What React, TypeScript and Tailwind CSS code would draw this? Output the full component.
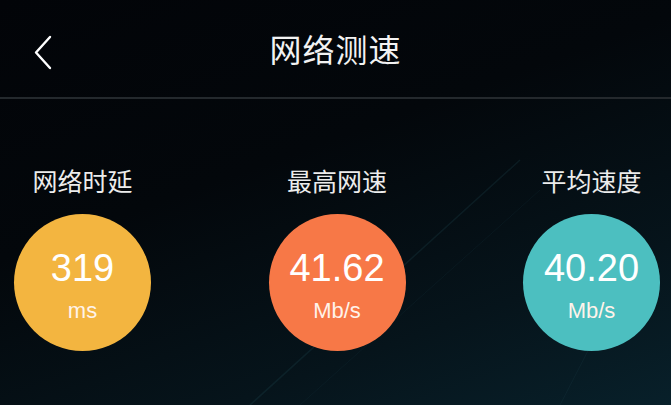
interface Stat {
  label: string;
  value: string;
  unit: string;
  color: string;
}

const stats: Stat[] = [
  { label: '网络时延', value: '319', unit: 'ms', color: 'bg-[#f3b540]' },
  { label: '最高网速', value: '41.62', unit: 'Mb/s', color: 'bg-[#f77847]' },
  { label: '平均速度', value: '40.20', unit: 'Mb/s', color: 'bg-[#4cbfc0]' },
];

const cjk = 'font-["Noto_Sans_CJK_SC","Noto_Sans",sans-serif]';
const latin = 'font-["Liberation_Sans",Arial,sans-serif]';

export default function App() {
  return (
    <div className="relative h-[405px] w-[671px] overflow-hidden bg-[linear-gradient(160deg,#020408_0%,#03070b_40%,#06141b_75%,#08202a_100%)] text-white">
      {/* faint light streaks in the backdrop */}
      <svg className="pointer-events-none absolute inset-0" width="671" height="405" viewBox="0 0 671 405">
        <line x1="250" y1="405" x2="520" y2="160" stroke="#2a5866" strokeOpacity="0.2" strokeWidth="1.5" />
        <line x1="300" y1="405" x2="540" y2="190" stroke="#1c3c47" strokeOpacity="0.18" strokeWidth="1" />
        <line x1="560" y1="405" x2="640" y2="250" stroke="#21444f" strokeOpacity="0.2" strokeWidth="1" />
      </svg>

      <header className="relative flex h-[99px] items-center justify-center border-b-2 border-[#24292d]">
        <svg className="absolute left-[30px] top-[34px]" width="26" height="38" viewBox="0 0 26 38" fill="none">
          <polyline points="20,3 6,18.5 20,34" stroke="white" strokeWidth="2.4" strokeLinecap="round" strokeLinejoin="round" />
        </svg>
        <h1 className={`${cjk} mt-[-2px] text-[32px] font-normal leading-none tracking-[1px] text-[#f2f2f2]`}>网络测速</h1>
      </header>

      <div className="relative flex justify-between pl-[14px] pr-[11px] pt-[64px]">
        {stats.map((s) => (
          <div key={s.label} className="flex w-[137px] flex-col items-center">
            <div className={`${cjk} text-[25px] leading-[34px] text-[#ececec]`}>{s.label}</div>
            <div className={`mt-[17px] flex h-[137px] w-[137px] flex-col items-center rounded-full pt-[33px] ${s.color}`}>
              <div className={`${latin} text-[38px] leading-[42px] text-white`}>{s.value}</div>
              <div className={`${latin} mt-[10px] text-[22px] leading-[24px] text-[#fff3ea]`}>{s.unit}</div>
            </div>
          </div>
        ))}
      </div>
    </div>
  );
}
